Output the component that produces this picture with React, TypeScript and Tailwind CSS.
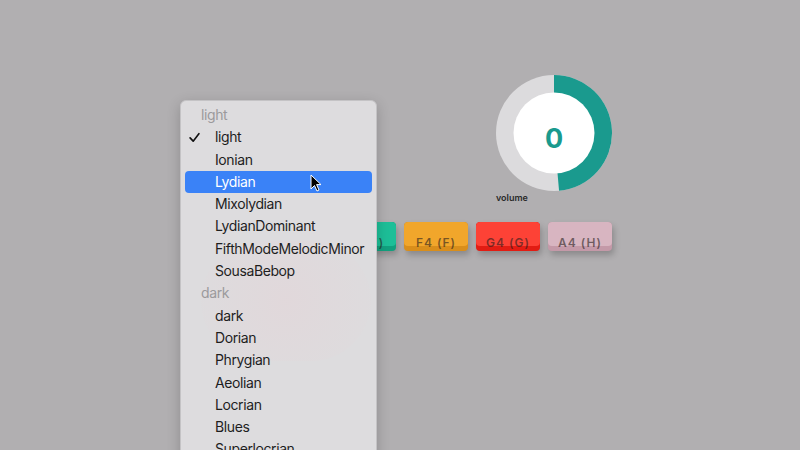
import React from "react";

const groups: { header: string; items: string[] }[] = [
  {
    header: "light",
    items: ["light", "Ionian", "Lydian", "Mixolydian", "LydianDominant", "FifthModeMelodicMinor", "SousaBebop"],
  },
  {
    header: "dark",
    items: ["dark", "Dorian", "Phrygian", "Aeolian", "Locrian", "Blues", "Superlocrian"],
  },
];

const keys = [
  { label: "", face: "bg-[#7b6cf0]", stripe: "bg-[#5e4fd6]" },
  { label: "", face: "bg-[#3b9cf0]", stripe: "bg-[#227fd1]" },
  { label: "E4 (E)", face: "bg-[#1dbf98]", stripe: "bg-[#12a07e]" },
  { label: "F4 (F)", face: "bg-[#f1a62b]", stripe: "bg-[#d98e1b]" },
  { label: "G4 (G)", face: "bg-[#fd4236]", stripe: "bg-[#e21c13]" },
  { label: "A4 (H)", face: "bg-[#d8b5c1]", stripe: "bg-[#c499a8]" },
];

function Knob() {
  const a = (175 * Math.PI) / 180;
  const x = 58 + 58 * Math.sin(a);
  const y = 58 - 58 * Math.cos(a);
  return (
    <svg width="116" height="116" viewBox="0 0 116 116">
      <circle cx="58" cy="58" r="58" fill="#dcdbdd" />
      <path d={`M58 58 L58 0 A58 58 0 0 1 ${x} ${y} Z`} fill="#1a9a8e" />
      <circle cx="58" cy="58" r="40.5" fill="#ffffff" />
      <text
        x="58"
        y="73"
        textAnchor="middle"
        fontSize="27"
        fontWeight="700"
        fill="#1a9a8e"
        fontFamily="Inter, 'Liberation Sans', sans-serif"
      >
        0
      </text>
    </svg>
  );
}

function Check() {
  return (
    <svg width="11" height="11" viewBox="0 0 10 10" className="absolute left-[4px] top-[6px]">
      <path d="M1 5.3 L3.8 8.3 L9 1.5" fill="none" stroke="#111" strokeWidth="1.5" strokeLinecap="round" strokeLinejoin="round" />
    </svg>
  );
}

export default function App() {
  return (
    <div className="relative w-[800px] h-[450px] overflow-hidden bg-[#b1afb1] font-['Inter','Liberation_Sans',sans-serif]">
      <div className="flex flex-col items-end w-[612px] pt-[75px]">
        <div className="flex flex-col items-start">
          <Knob />
          <div className="mt-[1px] text-[9px] leading-[12px] font-semibold text-[#2a2a2a]">volume</div>
        </div>
        <div className="flex gap-2 mt-[18px]">
          {keys.map((k, i) => (
            <div
              key={i}
              className={`relative w-[64px] h-[29px] rounded-[4px] overflow-hidden ${k.stripe} shadow-[2px_4px_6px_rgba(0,0,0,0.22)]`}
            >
              <div className={`h-[24px] rounded-[4px] ${k.face}`} />
              {k.label && (
                <div className="absolute inset-x-0 bottom-[1px] text-center text-[12px] leading-[14px] font-semibold tracking-[1px] text-[rgba(40,30,30,0.6)]">
                  {k.label}
                </div>
              )}
            </div>
          ))}
        </div>
      </div>

      <div className="absolute left-[180px] top-[100px] w-[197px] h-[370px] rounded-[6px] border border-[#c4c3c5] bg-[#dddcde] shadow-[0_4px_14px_rgba(0,0,0,0.2)] overflow-hidden">
        <div className="absolute left-[20px] top-[140px] w-[170px] h-[120px] rounded-full bg-[radial-gradient(circle,rgba(235,205,210,0.28),rgba(221,220,222,0))]" />
        <div className="relative pt-[3px] text-[14px] tracking-[-0.4px] text-[#1e1e1e]">
          {groups.map((g) => (
            <div key={g.header}>
              <div className="h-[22.3px] leading-[22.3px] pl-[20px] text-[#9b9a9c]">{g.header}</div>
              {g.items.map((it) => {
                const hi = it === "Lydian";
                return (
                  <div
                    key={it}
                    className={`relative h-[22.3px] leading-[22.3px] mx-[4px] pl-[30px] rounded-[4px] ${hi ? "bg-[#3a82f7] text-white" : ""}`}
                  >
                    {it === "light" && <Check />}
                    {it}
                    {hi && (
                      <svg width="12" height="18" viewBox="0 0 12 18" className="absolute left-[125px] top-[3px]">
                        <path d="M1 1 L1 15 L4.5 11.5 L7 17 L9 16 L6.6 10.6 L11 10.6 Z" fill="#000" stroke="#fff" strokeWidth="1" />
                      </svg>
                    )}
                  </div>
                );
              })}
            </div>
          ))}
        </div>
      </div>
    </div>
  );
}
